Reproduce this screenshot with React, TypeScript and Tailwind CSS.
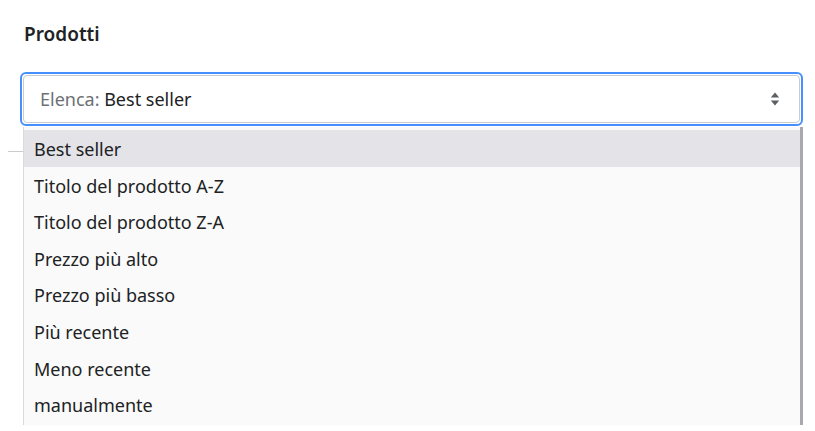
import { useState } from "react";

const sortOptions = [
  "Best seller",
  "Titolo del prodotto A-Z",
  "Titolo del prodotto Z-A",
  "Prezzo più alto",
  "Prezzo più basso",
  "Più recente",
  "Meno recente",
  "manualmente",
];

function SelectArrows() {
  return (
    <svg className="w-5 h-5 text-[#5c5f62]" viewBox="0 0 20 20" fill="currentColor">
      <path d="M10 3.5l4.2 5h-8.4z" />
      <path d="M10 16.5l-4.2-5h8.4z" />
    </svg>
  );
}

export default function App() {
  const [selected, setSelected] = useState("Best seller");

  return (
    <div className="relative h-[431px] overflow-hidden bg-white text-[#202223] font-['Noto_Sans',sans-serif]">
      <div className="pt-[22px]">
        <h2 className="pl-[24px] text-[19px] leading-6 font-semibold">Prodotti</h2>

        <div className="ml-[20px] mr-[12px] mt-[26px] rounded-[6px] border-2 border-[#458fff] p-px">
          <div className="flex h-[48px] items-center justify-between rounded-[4px] border border-[#c9cccf] bg-white pl-[16px] pr-[14px] text-[18px]">
            <span className="pt-px">
              <span className="text-[#6d7175]">Elenca: </span>
              {selected}
            </span>
            <SelectArrows />
          </div>
        </div>

        <div className="ml-[8px] mr-[15px] mt-[25px] border-t border-[#c9cccf]" />
      </div>

      <ul className="absolute left-[23px] top-[127px] w-[777px] border-l border-[#d9d9de] bg-[#fafafa] pt-[3px] pb-[2px] shadow-[3px_0_0_0_#a9a9ad]">
        {sortOptions.map((option) => (
          <li
            key={option}
            onClick={() => setSelected(option)}
            className={`h-[36.6px] pl-[10px] pt-px text-[18px] leading-[37px] ${
              option === selected ? "bg-[#e3e3e8]" : ""
            }`}
          >
            {option}
          </li>
        ))}
      </ul>
    </div>
  );
}
